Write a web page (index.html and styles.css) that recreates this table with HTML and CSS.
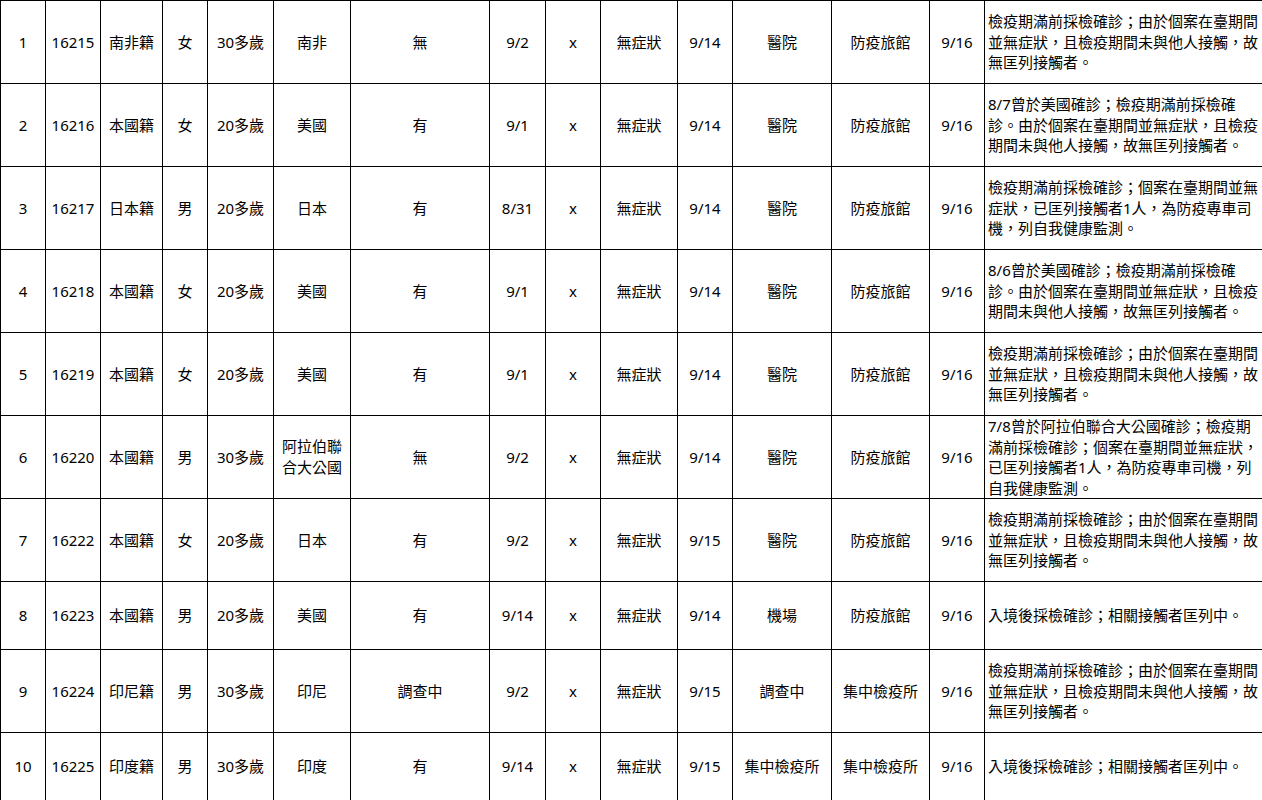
FILE: index.html
```
<!DOCTYPE html>
<html lang="zh-TW">
<head>
<meta charset="utf-8">
<title>確診個案列表</title>
<link rel="stylesheet" href="styles.css">
</head>
<body>
<table class="cases">
<colgroup>
<col class="c-no"><col class="c-id"><col class="c-nat"><col class="c-sex"><col class="c-age"><col class="c-country"><col class="c-hist"><col class="c-arr"><col class="c-x"><col class="c-sym"><col class="c-date"><col class="c-place"><col class="c-iso"><col class="c-conf"><col class="c-note">
</colgroup>
<tbody>
<tr class="tall"><td>1</td><td>16215</td><td>南非籍</td><td>女</td><td>30多歲</td><td>南非</td><td>無</td><td>9/2</td><td>x</td><td>無症狀</td><td>9/14</td><td>醫院</td><td>防疫旅館</td><td>9/16</td><td class="note">檢疫期滿前採檢確診；由於個案在臺期間並無症狀，且檢疫期間未與他人接觸，故無匡列接觸者。</td></tr>
<tr class="tall"><td>2</td><td>16216</td><td>本國籍</td><td>女</td><td>20多歲</td><td>美國</td><td>有</td><td>9/1</td><td>x</td><td>無症狀</td><td>9/14</td><td>醫院</td><td>防疫旅館</td><td>9/16</td><td class="note">8/7曾於美國確診；檢疫期滿前採檢確診。由於個案在臺期間並無症狀，且檢疫期間未與他人接觸，故無匡列接觸者。</td></tr>
<tr class="tall"><td>3</td><td>16217</td><td>日本籍</td><td>男</td><td>20多歲</td><td>日本</td><td>有</td><td>8/31</td><td>x</td><td>無症狀</td><td>9/14</td><td>醫院</td><td>防疫旅館</td><td>9/16</td><td class="note">檢疫期滿前採檢確診；個案在臺期間並無症狀，已匡列接觸者1人，為防疫專車司機，列自我健康監測。</td></tr>
<tr class="tall"><td>4</td><td>16218</td><td>本國籍</td><td>女</td><td>20多歲</td><td>美國</td><td>有</td><td>9/1</td><td>x</td><td>無症狀</td><td>9/14</td><td>醫院</td><td>防疫旅館</td><td>9/16</td><td class="note">8/6曾於美國確診；檢疫期滿前採檢確診。由於個案在臺期間並無症狀，且檢疫期間未與他人接觸，故無匡列接觸者。</td></tr>
<tr class="tall"><td>5</td><td>16219</td><td>本國籍</td><td>女</td><td>20多歲</td><td>美國</td><td>有</td><td>9/1</td><td>x</td><td>無症狀</td><td>9/14</td><td>醫院</td><td>防疫旅館</td><td>9/16</td><td class="note">檢疫期滿前採檢確診；由於個案在臺期間並無症狀，且檢疫期間未與他人接觸，故無匡列接觸者。</td></tr>
<tr class="tall"><td>6</td><td>16220</td><td>本國籍</td><td>男</td><td>30多歲</td><td>阿拉伯聯合大公國</td><td>無</td><td>9/2</td><td>x</td><td>無症狀</td><td>9/14</td><td>醫院</td><td>防疫旅館</td><td>9/16</td><td class="note">7/8曾於阿拉伯聯合大公國確診；檢疫期滿前採檢確診；個案在臺期間並無症狀，已匡列接觸者1人，為防疫專車司機，列自我健康監測。</td></tr>
<tr class="tall"><td>7</td><td>16222</td><td>本國籍</td><td>女</td><td>20多歲</td><td>日本</td><td>有</td><td>9/2</td><td>x</td><td>無症狀</td><td>9/15</td><td>醫院</td><td>防疫旅館</td><td>9/16</td><td class="note">檢疫期滿前採檢確診；由於個案在臺期間並無症狀，且檢疫期間未與他人接觸，故無匡列接觸者。</td></tr>
<tr class="short"><td>8</td><td>16223</td><td>本國籍</td><td>男</td><td>20多歲</td><td>美國</td><td>有</td><td>9/14</td><td>x</td><td>無症狀</td><td>9/14</td><td>機場</td><td>防疫旅館</td><td>9/16</td><td class="note">入境後採檢確診；相關接觸者匡列中。</td></tr>
<tr class="tall"><td>9</td><td>16224</td><td>印尼籍</td><td>男</td><td>30多歲</td><td>印尼</td><td>調查中</td><td>9/2</td><td>x</td><td>無症狀</td><td>9/15</td><td>調查中</td><td>集中檢疫所</td><td>9/16</td><td class="note">檢疫期滿前採檢確診；由於個案在臺期間並無症狀，且檢疫期間未與他人接觸，故無匡列接觸者。</td></tr>
<tr class="short"><td>10</td><td>16225</td><td>印度籍</td><td>男</td><td>30多歲</td><td>印度</td><td>有</td><td>9/14</td><td>x</td><td>無症狀</td><td>9/15</td><td>集中檢疫所</td><td>集中檢疫所</td><td>9/16</td><td class="note">入境後採檢確診；相關接觸者匡列中。</td></tr>
</tbody>
</table>
</body>
</html>
```

FILE: styles.css
```
html, body {
  margin: 0;
  padding: 0;
  background: #ffffff;
}

body {
  font-family: "Noto Sans", "Noto Sans CJK TC", sans-serif;
  font-size: 15px;
  color: #000000;
  overflow: hidden;
}

.cases {
  border-collapse: collapse;
  table-layout: fixed;
  width: 1262px;
}

.cases td {
  border: 1px solid #000000;
  padding: 0 2px;
  text-align: center;
  vertical-align: middle;
  line-height: 21px;
  overflow: hidden;
}

.cases td.note {
  text-align: left;
  padding: 0 2px 0 3px;
  line-height: 20.5px;
}

.tall { height: 83px; }
.short { height: 68px; }

.c-no { width: 45px; }
.c-id { width: 55px; }
.c-nat { width: 62px; }
.c-sex { width: 45px; }
.c-age { width: 66px; }
.c-country { width: 77px; }
.c-hist { width: 139px; }
.c-arr { width: 56px; }
.c-x { width: 55px; }
.c-sym { width: 77px; }
.c-date { width: 55px; }
.c-place { width: 99px; }
.c-iso { width: 98px; }
.c-conf { width: 55px; }
.c-note { width: 278px; }
```
